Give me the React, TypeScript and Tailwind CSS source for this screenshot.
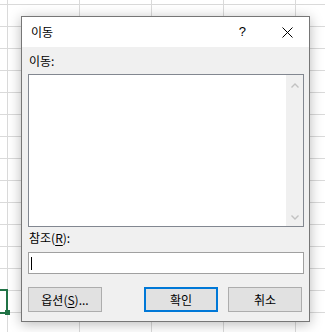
function Chevron({ up }: { up?: boolean }) {
  return (
    <svg width="8" height="5" viewBox="0 0 8 5" className="block">
      <path
        d={up ? "M0.5 4.5 L4 1 L7.5 4.5" : "M0.5 0.5 L4 4 L7.5 0.5"}
        fill="none"
        stroke="#c2c2c2"
        strokeWidth="1.4"
      />
    </svg>
  );
}

function Button({ children, primary }: { children: React.ReactNode; primary?: boolean }) {
  return (
    <button
      className={
        primary
          ? "flex h-[25px] w-[74px] items-center justify-center border-2 border-[#0078d7] bg-[#e1e1e1] leading-4"
          : "flex h-[25px] w-[74px] items-center justify-center border border-[#adadad] bg-[#e1e1e1] leading-4"
      }
    >
      {children}
    </button>
  );
}

function GoToDialog() {
  return (
    <div className="absolute left-[21px] top-[16px] flex h-[306px] w-[289px] flex-col border border-[#767676] bg-[#f0f0f0] shadow-[0_2px_12px_rgba(0,0,0,0.28)]">
      <div className="flex h-[30px] shrink-0 items-center bg-white pl-[9px]">
        <span className="leading-4">이동</span>
        <span className="ml-auto mr-[36px] font-['Liberation_Sans',sans-serif] text-[13px] leading-4">?</span>
        <svg width="11" height="11" viewBox="0 0 11 11" className="mr-[16px]">
          <path d="M0.5 0.5 L10.5 10.5 M10.5 0.5 L0.5 10.5" stroke="#000" strokeWidth="1" />
        </svg>
      </div>

      <div className="flex flex-1 flex-col pl-[6px] pr-[5px] pt-[6px]">
        <label className="pl-px leading-4">이동:</label>
        <div className="mt-[5px] flex h-[153px] border border-[#828790] bg-white">
          <div className="flex-1" />
          <div className="flex w-[17px] flex-col items-center justify-between bg-[#f0f0f0] pb-[6px] pt-[8px]">
            <Chevron up />
            <Chevron />
          </div>
        </div>

        <label className="mt-[3px] pl-px leading-4">
          참조(<span className="underline underline-offset-2">R</span>):
        </label>
        <div className="mt-[6px] flex h-[22px] items-center border border-[#a0a0a0] bg-white pl-[2px]">
          <div className="h-[13px] w-px bg-black" />
        </div>

        <div className="mt-[13px] flex pr-[2px]">
          <Button>
            옵션(<span className="underline underline-offset-2">S</span>)...
          </Button>
          <div className="ml-auto flex gap-[10px]">
            <Button primary>확인</Button>
            <Button>취소</Button>
          </div>
        </div>
      </div>
    </div>
  );
}

export default function App() {
  return (
    <div className="relative h-[332px] w-[325px] overflow-hidden bg-white bg-[linear-gradient(to_right,#dadada_1px,transparent_1px),linear-gradient(to_bottom,#dadada_1px,transparent_1px)] bg-size-[72px_22px] bg-position-[7px_4px] font-['Noto_Sans_CJK_KR','Noto_Sans',sans-serif] text-[12px] text-black">
      {/* selected cell peeking out at the left */}
      <div className="absolute left-0 top-[289px] h-[2px] w-[8px] bg-[#217346]" />
      <div className="absolute left-[6px] top-[289px] h-[22px] w-[2px] bg-[#217346]" />
      <div className="absolute left-0 top-[312px] h-[2px] w-[5px] bg-[#217346]" />
      <div className="absolute left-[5px] top-[310px] h-[5px] w-[5px] bg-[#217346]" />
      <GoToDialog />
    </div>
  );
}
